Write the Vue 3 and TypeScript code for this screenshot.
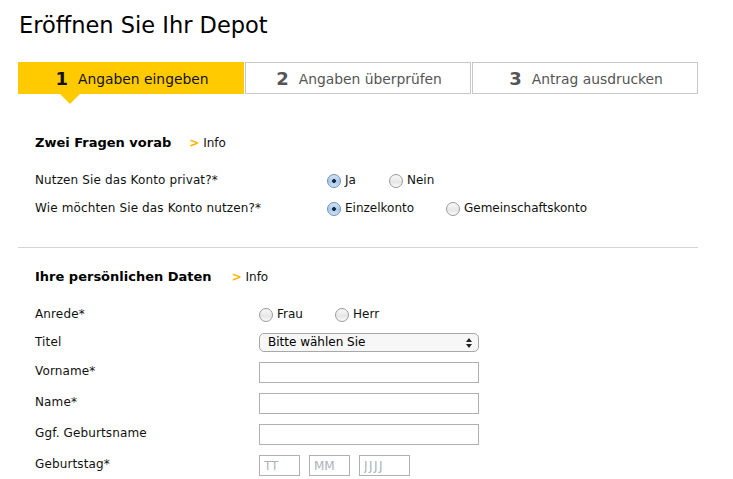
<script setup lang="ts">
const steps = [
  { n: 1, label: 'Angaben eingeben', active: true },
  { n: 2, label: 'Angaben überprüfen', active: false },
  { n: 3, label: 'Antrag ausdrucken', active: false },
]
</script>

<template>
  <main class="page">
    <h1 class="title">Eröffnen Sie Ihr Depot</h1>
    <ol class="steps">
      <li v-for="s in steps" :key="s.n" class="step" :class="{ active: s.active }">
        <b class="num">{{ s.n }}</b><span class="step-label">{{ s.label }}</span>
      </li>
    </ol>

    <section class="first">
      <div class="head">
        <h2>Zwei Fragen vorab</h2>
        <a class="info"><i>&gt;</i> Info</a>
      </div>
      <div class="row q1">
        <label class="lab wide">Nutzen Sie das Konto privat?*</label>
        <label class="opt gap1"><input type="radio" name="a" checked />Ja</label>
        <label class="opt"><input type="radio" name="a" />Nein</label>
      </div>
      <div class="row q2">
        <label class="lab wide">Wie möchten Sie das Konto nutzen?*</label>
        <label class="opt gap2"><input type="radio" name="b" checked />Einzelkonto</label>
        <label class="opt"><input type="radio" name="b" />Gemeinschaftskonto</label>
      </div>
    </section>

    <section class="second">
      <div class="head">
        <h2>Ihre persönlichen Daten</h2>
        <a class="info"><i>&gt;</i> Info</a>
      </div>
      <div class="row r-anrede">
        <label class="lab">Anrede*</label>
        <label class="opt gap3"><input type="radio" name="c" />Frau</label>
        <label class="opt"><input type="radio" name="c" />Herr</label>
      </div>
      <div class="row r-titel">
        <label class="lab">Titel</label>
        <div class="select">
          <select><option>Bitte wählen Sie</option></select>
          <svg width="6" height="10" viewBox="0 0 6 10"><path d="M3 0 6 4H0zM3 10 0 6h6z" fill="#222" /></svg>
        </div>
      </div>
      <div class="row r-field">
        <label class="lab">Vorname*</label><input class="text" type="text" />
      </div>
      <div class="row r-field">
        <label class="lab">Name*</label><input class="text" type="text" />
      </div>
      <div class="row r-field">
        <label class="lab">Ggf. Geburtsname</label><input class="text" type="text" />
      </div>
      <div class="row r-field">
        <label class="lab">Geburtstag*</label>
        <div class="date">
          <input class="text d" type="text" placeholder="TT" />
          <input class="text d" type="text" placeholder="MM" />
          <input class="text y" type="text" placeholder="JJJJ" />
        </div>
      </div>
    </section>
  </main>
</template>

<style>
html, body { background: #fff; overflow: hidden; }
</style>

<style scoped>
.page {
  width: 680px;
  height: 479px;
  overflow: hidden;
  margin-left: 18px;
  font-family: "DejaVu Sans", Verdana, sans-serif;
  font-size: 12px;
  color: #111;
}
.title {
  margin: 0 0 0 1px;
  padding-top: 11px;
  height: 62px;
  box-sizing: border-box;
  font-size: 22.5px;
  line-height: 28px;
  font-weight: 400;
  color: #000;
}
.steps {
  list-style: none;
  margin: 0;
  padding: 0;
  display: grid;
  grid-template-columns: 226px 226px 226px;
  column-gap: 1px;
  height: 32px;
}
.step {
  position: relative;
  display: flex;
  align-items: center;
  justify-content: center;
  box-sizing: border-box;
  border: 1px solid #c8c8c8;
  padding-left: 2px;
  font-size: 13.85px;
  color: #555;
}
.step-label { padding-top: 2px; }
.step.active {
  background: #ffcb00;
  border-color: #ffcb00;
  color: #111;
}
.step.active::after {
  content: "";
  position: absolute;
  left: 41px;
  top: 31px;
  border: 10px solid transparent;
  border-top-color: #ffcb00;
  border-bottom: 0;
}
.num {
  font-size: 18px;
  font-weight: 700;
  margin-right: 10px;
}
.first { padding: 0 0 0 17px; }
.head {
  display: flex;
  align-items: center;
  height: 20px;
}
.first .head { margin-top: 38px; }
.second .head { margin-top: 18px; }
h2 {
  margin: 0;
  font-size: 13px;
  font-weight: 700;
  color: #000;
}
.info { margin-left: 18px; padding-top: 2px; color: #111; }
.second .info { margin-left: 20px; }
.info i {
  font-style: normal;
  font-weight: 700;
  color: #ffb400;
}
.row { display: flex; align-items: center; }
.q1 { height: 28px; margin-top: 14px; }
.q2 { height: 28px; }
.first { border-bottom: 1px solid #d4d4d4; padding-bottom: 25px; }
.second { padding-left: 17px; }
.lab { width: 224px; flex: none; padding-bottom: 2px; letter-spacing: 0.13px; }
.lab.wide { width: 292px; padding-bottom: 0; }
.r-field .lab { padding-bottom: 4px; }
.opt { display: flex; align-items: center; }
.r-anrede .opt { padding-bottom: 2px; }
.gap1 { width: 62px; }
.gap2 { width: 119px; }
.gap3 { width: 76px; }
.opt input {
  appearance: none;
  -webkit-appearance: none;
  width: 14px;
  height: 14px;
  margin: 2px 4px 0 0;
  border-radius: 50%;
  border: 1px solid #9a9a9a;
  background: linear-gradient(#f8f8f8, #e6e6e6 60%, #fafafa);
  box-sizing: border-box;
}
.opt input:checked {
  border-color: #6f8fb5;
  background:
    radial-gradient(circle, #1b2a44 0 1.6px, transparent 2.2px),
    linear-gradient(#d3e3f6, #a8c8ec 55%, #cfe2f8);
}
.r-anrede { height: 28px; margin-top: 15px; }
.r-titel { height: 28px; }
.select { position: relative; width: 220px; height: 19px; margin-bottom: 2px; }
.select select {
  appearance: none;
  -webkit-appearance: none;
  display: block;
  width: 100%;
  height: 19px;
  padding: 0 0 0 8px;
  box-sizing: border-box;
  border: 1px solid #a8a8a8;
  border-radius: 5px;
  background: #f7f7f7;
  font: inherit;
  color: #000;
}
.select svg { position: absolute; right: 7px; top: 5px; pointer-events: none; }
.r-field { height: 31px; }
.text {
  box-sizing: border-box;
  width: 220px;
  height: 21px;
  border: 1px solid #b0b0b0;
  border-radius: 0;
  background: #fff;
  padding: 0 4px;
  font: inherit;
  outline: none;
}
.text::placeholder { color: #aab2b8; opacity: 1; }
.y::placeholder { letter-spacing: 1.5px; }
.date { display: flex; gap: 9px; }
.d { width: 41px; }
.y { width: 51px; }
</style>
